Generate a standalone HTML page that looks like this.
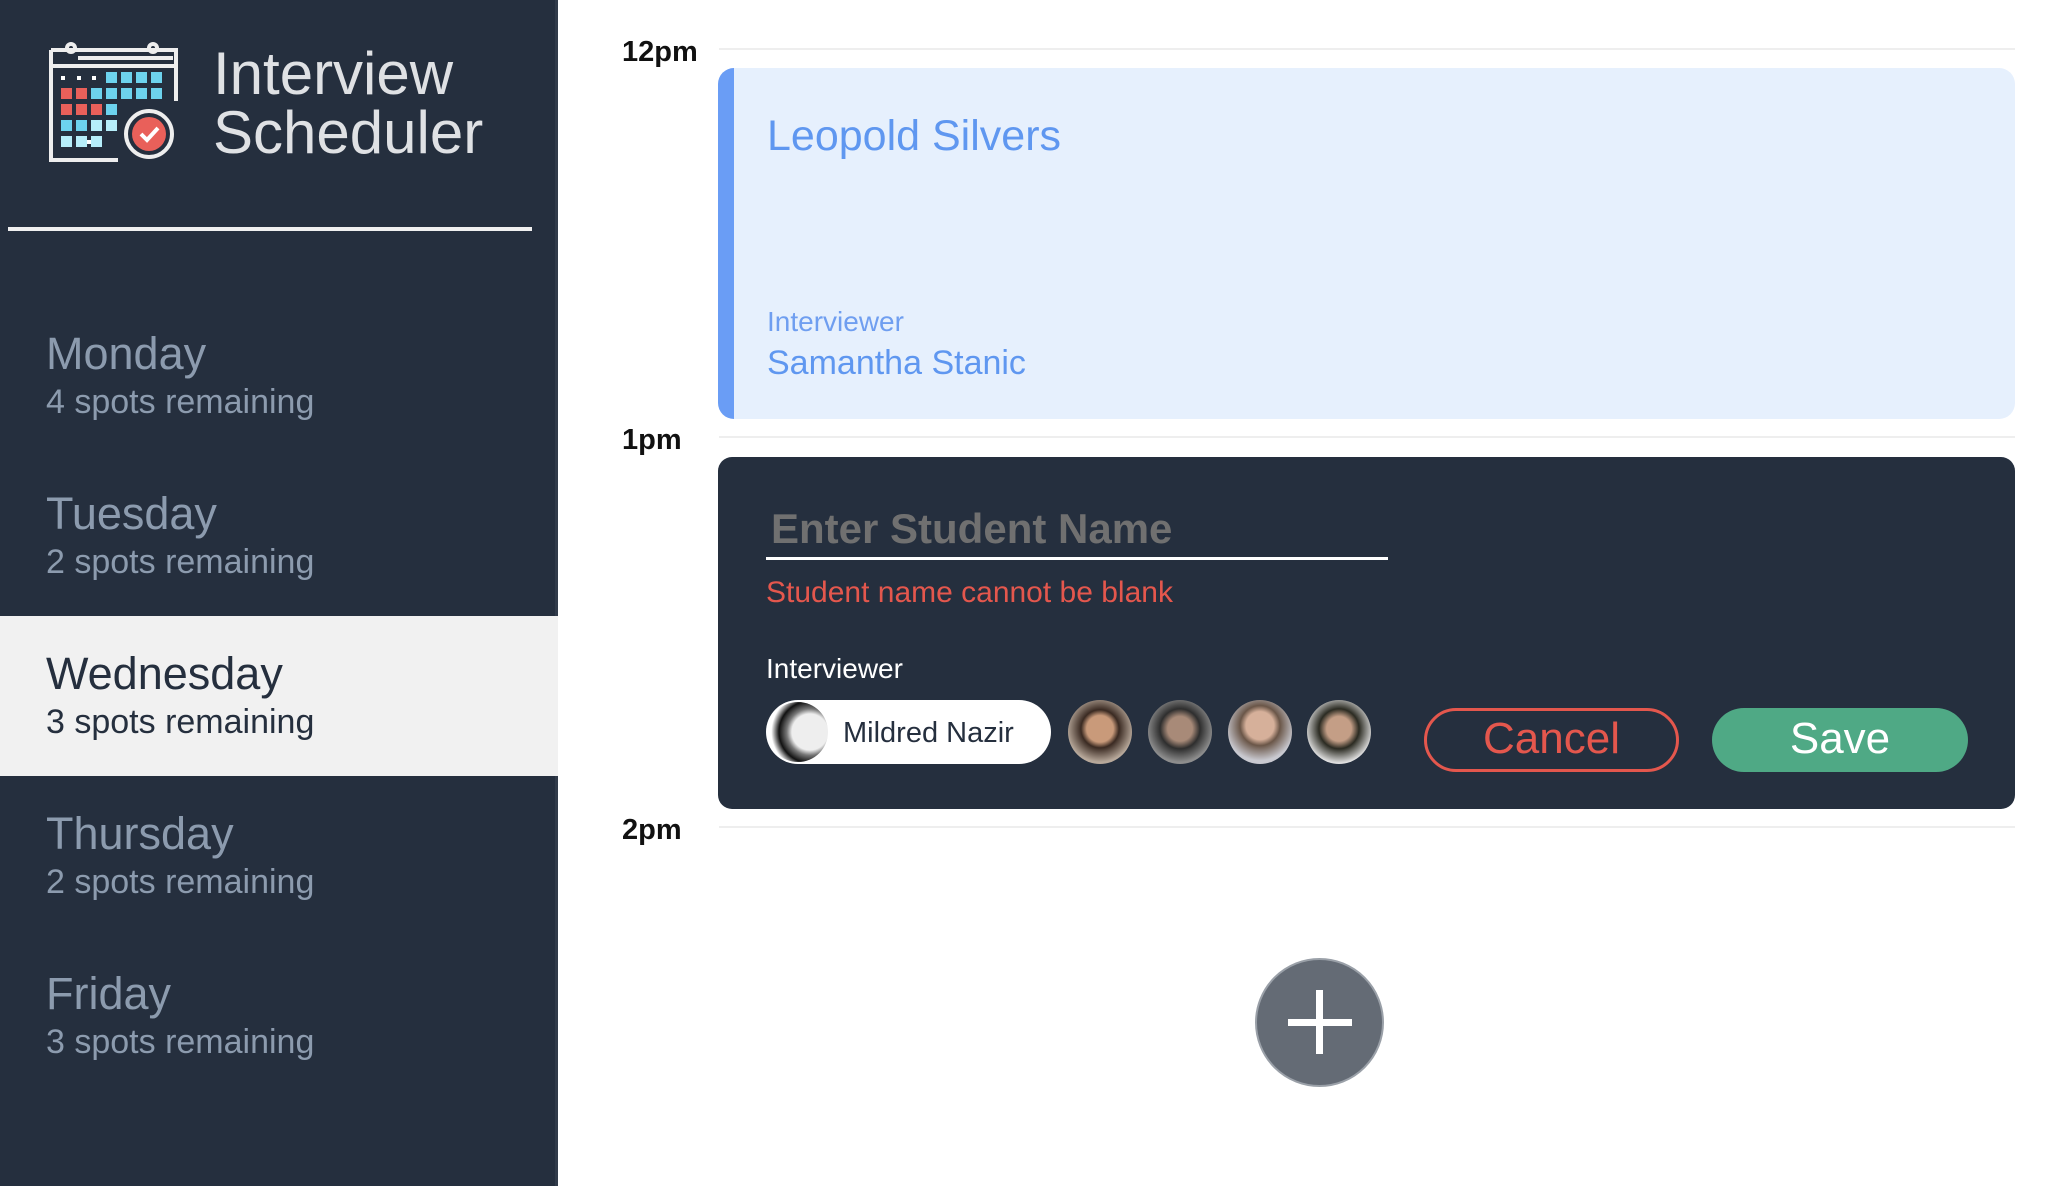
<!DOCTYPE html>
<html><head><meta charset="utf-8"><style>
*{margin:0;padding:0;box-sizing:border-box}
body{width:2068px;height:1186px;overflow:hidden;background:#fff;font-family:"Liberation Sans",sans-serif;position:relative}
.a{position:absolute;line-height:1;white-space:nowrap}
#side{position:absolute;left:0;top:0;width:558px;height:1186px;background:#252f3e;border-right:3px solid #313b4a}
.day{color:#8c9bae;font-size:45px;left:46px}
.sp{color:#8c9bae;font-size:34px;left:46px}
.hr{position:absolute;left:719px;width:1296px;height:2px;background:#eeeeee}
.tm{font-weight:bold;font-size:29px;color:#111}
.av{position:absolute;top:700px;width:64px;height:64px;border-radius:50%}
</style></head><body>
<div id="side">
<svg style="position:absolute;left:48px;top:38px" width="134" height="128" viewBox="0 0 134 128">
 <g fill="none" stroke="#eee" stroke-width="4">
  <path d="M3 12 H128 V63"/><path d="M3 12 V122 H70"/>
  <path d="M3 28 H128"/><path d="M30 20 H125"/>
  <circle cx="23" cy="10" r="4"/><circle cx="105" cy="10" r="4"/>
  <circle cx="101" cy="96" r="23"/>
 </g>
 <g fill="#fff"><rect x="13" y="38" width="4" height="4"/><rect x="29" y="38" width="4" height="4"/><rect x="44" y="38" width="4" height="4"/><rect x="39" y="102" width="4" height="4"/></g>
 <g fill="#6dd3ee"><rect x="58" y="34" width="11" height="11"/><rect x="73" y="34" width="11" height="11"/><rect x="88" y="34" width="11" height="11"/><rect x="103" y="34" width="11" height="11"/>
 <rect x="43" y="50" width="11" height="11"/><rect x="58" y="50" width="11" height="11"/><rect x="73" y="50" width="11" height="11"/><rect x="88" y="50" width="11" height="11"/><rect x="103" y="50" width="11" height="11"/>
 <rect x="58" y="66" width="11" height="11"/><rect x="13" y="82" width="11" height="11"/><rect x="28" y="82" width="11" height="11"/></g>
 <g fill="#b6eefa"><rect x="43" y="82" width="11" height="11"/><rect x="58" y="82" width="11" height="11"/><rect x="13" y="98" width="11" height="11"/><rect x="28" y="98" width="11" height="11"/><rect x="43" y="98" width="11" height="11"/></g>
 <g fill="#e9605a"><rect x="13" y="50" width="11" height="11"/><rect x="28" y="50" width="11" height="11"/><rect x="13" y="66" width="11" height="11"/><rect x="28" y="66" width="11" height="11"/><rect x="43" y="66" width="11" height="11"/>
 <circle cx="101" cy="96" r="17"/></g>
 <path d="M93 96 L99 102 L110 90" fill="none" stroke="#fff" stroke-width="4"/>
</svg>
<div class="a" style="left:213px;top:44px;font-size:60px;color:#dfe1e4;font-weight:300">Interview</div>
<div class="a" style="left:213px;top:103px;font-size:60px;color:#dfe1e4">Scheduler</div>
<div style="position:absolute;left:8px;top:227px;width:524px;height:4px;background:#f0f0f0"></div>

<div class="a day" style="top:331px">Monday</div><div class="a sp" style="top:385px">4 spots remaining</div>
<div class="a day" style="top:491px">Tuesday</div><div class="a sp" style="top:545px">2 spots remaining</div>
<div style="position:absolute;left:0;top:616px;width:558px;height:160px;background:#f1f1f1"></div>
<div class="a day" style="top:651px;color:#252f3e">Wednesday</div><div class="a sp" style="top:705px;color:#252f3e">3 spots remaining</div>
<div class="a day" style="top:811px">Thursday</div><div class="a sp" style="top:865px">2 spots remaining</div>
<div class="a day" style="top:971px">Friday</div><div class="a sp" style="top:1025px">3 spots remaining</div>
</div>

<div class="a tm" style="left:622px;top:38px">12pm</div>
<div class="hr" style="top:48px"></div>
<div style="position:absolute;left:718px;top:68px;width:1297px;height:351px;background:#e6f0fd;border-left:16px solid #6a9df5;border-radius:16px"></div>
<div class="a" style="left:767px;top:115px;font-size:43px;color:#5f97f0">Leopold Silvers</div>
<div class="a" style="left:767px;top:308px;font-size:28px;color:#6f9ef0;font-weight:300">Interviewer</div>
<div class="a" style="left:767px;top:346px;font-size:34px;color:#5f97f0">Samantha Stanic</div>

<div class="a tm" style="left:622px;top:426px">1pm</div>
<div class="hr" style="top:436px"></div>
<div style="position:absolute;left:718px;top:457px;width:1297px;height:352px;background:#252f3e;border-radius:14px"></div>
<div class="a" style="left:771px;top:508px;font-size:42px;font-weight:bold;color:#707070">Enter Student Name</div>
<div style="position:absolute;left:766px;top:557px;width:622px;height:3px;background:#fff"></div>
<div class="a" style="left:766px;top:578px;font-size:30px;color:#e4574d">Student name cannot be blank</div>
<div class="a" style="left:766px;top:655px;font-size:28px;color:#fff">Interviewer</div>
<div style="position:absolute;left:766px;top:700px;width:285px;height:64px;background:#fff;border-radius:32px;overflow:hidden">
 <div style="position:absolute;left:2px;top:2px;width:60px;height:60px;border-radius:50%;background:radial-gradient(circle at 70% 50%,#eee 0 35%,#777 45%,#111 60%,#fff 75%)"></div>
 <div class="a" style="left:77px;top:19px;font-size:29px;color:#252f3e">Mildred Nazir</div>
</div>
<div class="av" style="left:1068px;background:radial-gradient(circle at 50% 45%,#c99a7a 0 28%,#3a2a22 40%,#b7a89a 70%)"></div>
<div class="av" style="left:1148px;background:radial-gradient(circle at 50% 45%,#a88a78 0 26%,#2e2e2e 42%,#8d8d8d 70%)"></div>
<div class="av" style="left:1228px;background:radial-gradient(circle at 50% 40%,#d6b09a 0 28%,#6a5648 40%,#c9c9d0 70%)"></div>
<div class="av" style="left:1307px;background:radial-gradient(circle at 50% 45%,#c49e86 0 26%,#2b2b22 42%,#e0e0e0 72%)"></div>
<div style="position:absolute;left:1424px;top:708px;width:255px;height:64px;border:3px solid #e4574d;border-radius:32px"></div>
<div class="a" style="left:1424px;width:255px;text-align:center;top:717px;font-size:44px;color:#e4574d">Cancel</div>
<div style="position:absolute;left:1712px;top:708px;width:256px;height:64px;background:#4fa985;border-radius:32px"></div>
<div class="a" style="left:1712px;width:256px;text-align:center;top:717px;font-size:44px;color:#fff">Save</div>

<div class="a tm" style="left:622px;top:816px">2pm</div>
<div class="hr" style="top:826px"></div>

<div style="position:absolute;left:1255px;top:958px;width:129px;height:129px;border-radius:50%;background:#646b75;border:2px solid #9aa0a8"></div>
<div style="position:absolute;left:1288px;top:1019px;width:64px;height:7px;background:#fff"></div>
<div style="position:absolute;left:1316px;top:990px;width:7px;height:64px;background:#fff"></div>
</body></html>
